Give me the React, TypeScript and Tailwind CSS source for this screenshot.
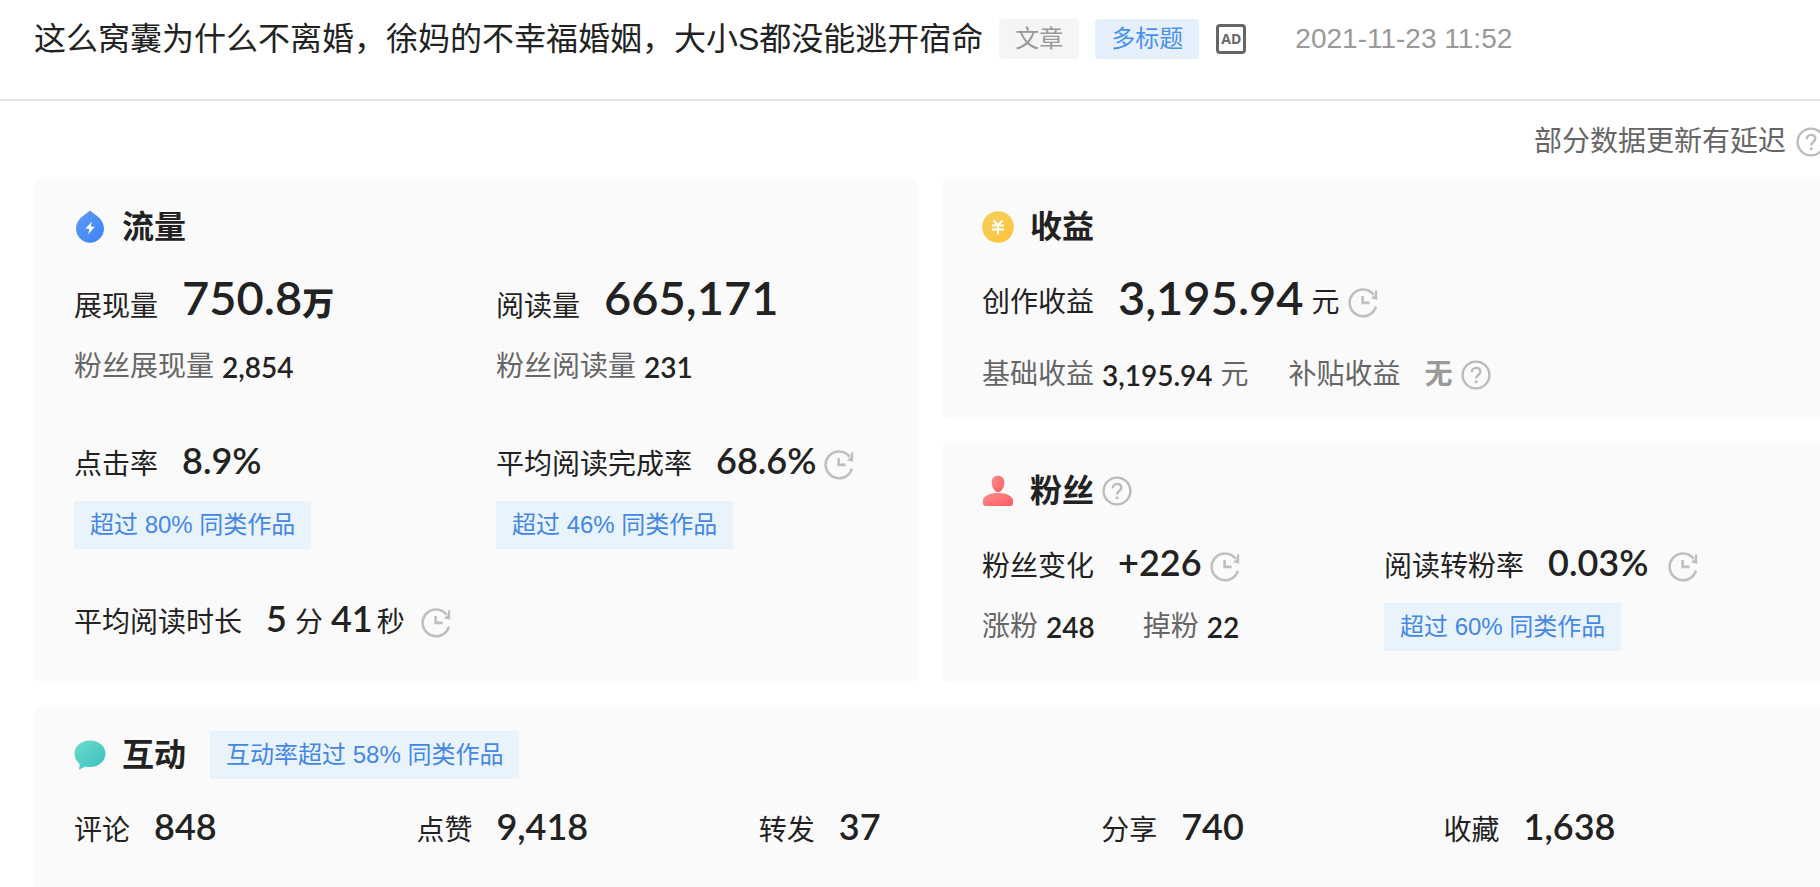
import type { ReactNode } from 'react'

const cjk = "font-['Liberation_Sans','Noto_Sans_CJK_SC',sans-serif]"
const num = "font-['Lato','Noto_Sans_CJK_SC',sans-serif] font-semibold text-[#222]"

function ClockIcon({ className = '' }: { className?: string }) {
  return (
    <svg viewBox="0 0 30 30" fill="none" stroke="#bfbfbf" strokeWidth="2.6" className={`h-10 w-[30px] shrink-0 ${className}`}>
      <path d="M27.9 18.6A13.4 13.4 0 1 1 25.6 6.6" />
      <path d="M29.2 2.2v9.6l-6.4-1.6 3.8-3.2.6-4.8Z" fill="#bfbfbf" stroke="none" />
      <path d="M14.6 8v6.9h7" />
    </svg>
  )
}

function HelpIcon({ className = '' }: { className?: string }) {
  return (
    <svg viewBox="0 0 30 30" fill="none" stroke="#bbb" strokeWidth="2.4" className={`h-10 w-[30px] shrink-0 ${className}`}>
      <circle cx="15" cy="15" r="13.4" />
      <path d="M10.8 12.2c0-2.6 1.8-4.3 4.3-4.3s4.2 1.6 4.2 3.9c0 3.2-4.2 3.3-4.2 6.6" />
      <circle cx="15.1" cy="21.8" r="1.5" fill="#bbb" stroke="none" />
    </svg>
  )
}

function TrafficIcon() {
  return (
    <svg viewBox="0 0 32 32" className="h-8 w-8">
      <defs>
        <linearGradient id="traffic" x1="0" y1="0" x2="1" y2="1">
          <stop offset="0" stopColor="#5f9bf3" />
          <stop offset="1" stopColor="#3d83f8" />
        </linearGradient>
      </defs>
      <path d="M14.4.7a2.4 2.4 0 0 1 3.2 0C22 4.3 30 8.5 30 17.5A14 14.3 0 0 1 2 17.5C2 8.5 10 4.3 14.4.7Z" fill="url(#traffic)" />
      <path d="M17.8 10.5 11.5 17.8h3.8L14.3 23.5l6.4-7.8h-3.9Z" fill="#fff" />
    </svg>
  )
}

function IncomeIcon() {
  return (
    <svg viewBox="0 0 32 32" className="h-8 w-8">
      <defs>
        <linearGradient id="income" x1="0" y1="0" x2="1" y2="1">
          <stop offset="0" stopColor="#f5cf5e" />
          <stop offset="1" stopColor="#ffc33c" />
        </linearGradient>
      </defs>
      <circle cx="16" cy="16" r="15.8" fill="url(#income)" />
      <path d="m11.5 9.5 4.5 4.5 4.5-4.5M10 14.5h12M10 18.5h12M16 14v9.5" fill="none" stroke="#fff" strokeWidth="2" />
    </svg>
  )
}

function FansIcon() {
  return (
    <svg viewBox="0 0 32 32" className="h-8 w-8">
      <defs>
        <linearGradient id="fans" x1="0" y1="0" x2="1" y2="1">
          <stop offset="0" stopColor="#f88c8c" />
          <stop offset="1" stopColor="#ff5c61" />
        </linearGradient>
      </defs>
      <path d="M16 .8c3.9 0 6.3 2.7 6.3 6.4 0 4.3-2.4 10-6.3 10s-6.3-5.7-6.3-10C9.700 3.5 12.1.8 16 .8Z" fill="url(#fans)" />
      <path d="M1 24.5C3 20 9 18 16 18s13 2 15 6.5v4c0 1.5-.8 2.5-2.5 2.5h-25C1.8 31 1 30 1 28.5Z" fill="url(#fans)" />
    </svg>
  )
}

function ChatIcon() {
  return (
    <svg viewBox="0 0 32 32" className="h-8 w-8">
      <defs>
        <linearGradient id="chat" x1="0" y1="0" x2="1" y2="1">
          <stop offset="0" stopColor="#6fdccb" />
          <stop offset="1" stopColor="#36bfc0" />
        </linearGradient>
      </defs>
      <path d="M16 1.5c8.7 0 15.5 5.5 15.5 13S24.7 28 16 28c-1.7 0-3.3-.2-4.7-.6L6 30.3c-.6.3-1 0-.9-.7l.7-4.7C2.5 22.5.5 18.8.5 14.5c0-7.5 6.8-13 15.5-13Z" fill="url(#chat)" />
    </svg>
  )
}

function AdIcon() {
  return (
    <span className="flex h-8 w-8 items-center justify-center">
      <span className="flex h-[30px] w-[30px] items-center justify-center rounded-sm border-[3px] border-[#666] font-['Open_Sans',sans-serif] text-sm font-bold text-[#666]">
        AD
      </span>
    </span>
  )
}

function Heading({ icon, title, children }: { icon: ReactNode; title: string; children?: ReactNode }) {
  return (
    <div className="flex h-12 items-center">
      {icon}
      <h2 className="ml-4 text-[32px] leading-10 font-bold">{title}</h2>
      {children}
    </div>
  )
}

function Rank({ children, className = '' }: { children: ReactNode; className?: string }) {
  return (
    <span className={`inline-flex h-12 items-center bg-[#e9f3fc] px-4 text-2xl text-[#4487e6] ${className}`}>
      {children}
    </span>
  )
}

// etiqueta + valor, alineados abajo
function Metric({ label, value, children }: { label: string; value: ReactNode; children?: ReactNode }) {
  return (
    <div className="flex items-end whitespace-nowrap">
      <span className="mr-6">{label}</span>
      <span className={`${num} text-4xl leading-[50px]`}>{value}</span>
      {children}
    </div>
  )
}

function SubMetric({ label, value }: { label: string; value: string }) {
  return (
    <div className="flex items-end gap-2 whitespace-nowrap text-[#666]">
      <span>{label}</span>
      <span className={num}>{value}</span>
    </div>
  )
}

const interactions = [
  { label: '评论', value: '848' },
  { label: '点赞', value: '9,418' },
  { label: '转发', value: '37' },
  { label: '分享', value: '740' },
  { label: '收藏', value: '1,638' },
]

export default function App() {
  return (
    <div lang="zh-CN" className={`${cjk} flex min-h-screen flex-col overflow-hidden bg-white text-[28px] leading-10 text-[#222]`}>
      <header className="flex items-center border-b-2 border-[#e5e5e5] pt-[19px] pb-10 pl-[34px] whitespace-nowrap">
        <h1 className="text-[32px] leading-10">这么窝囊为什么不离婚，徐妈的不幸福婚姻，大小S都没能逃开宿命</h1>
        <span className="ml-4 rounded-sm bg-[#f5f5f5] px-4 text-2xl leading-10 text-[#999]">文章</span>
        <span className="mx-4 rounded-sm bg-[#e6f0fd] px-4 text-2xl leading-10 text-[#4a90f0]">多标题</span>
        <AdIcon />
        <time className="ml-12 text-[#999]">2021-11-23 11:52</time>
      </header>

      {/* el contenido sobresale un poco por la derecha */}
      <main className="-mr-1.5 flex flex-1 flex-col pl-[34px]">
        <div className="flex h-[78px] items-center justify-end gap-2.5 pt-1 text-[#666]">
          部分数据更新有延迟
          <HelpIcon />
        </div>

        <div className="grid grid-cols-2 gap-6">
          <section className="rounded-lg bg-[#fafafa] pt-6 pb-10 pl-10">
            <Heading icon={<TrafficIcon />} title="流量" />
            <div className="mt-4 grid grid-cols-2">
              <div>
                <div className="flex items-end">
                  <span className="mr-6">展现量</span>
                  <span className={`${num} text-[47px] leading-[60px]`}>
                    750.8<b className="text-[32px] leading-none">万</b>
                  </span>
                </div>
                <div className="mt-5"><SubMetric label="粉丝展现量" value="2,854" /></div>
              </div>
              <div>
                <div className="flex items-end">
                  <span className="mr-6">阅读量</span>
                  <span className={`${num} text-[47px] leading-[60px]`}>665,171</span>
                </div>
                <div className="mt-5"><SubMetric label="粉丝阅读量" value="231" /></div>
              </div>
            </div>
            <div className="mt-12 grid grid-cols-2">
              <div>
                <Metric label="点击率" value="8.9%" />
                <Rank className="mt-4">超过 80% 同类作品</Rank>
              </div>
              <div>
                <Metric label="平均阅读完成率" value="68.6%"><ClockIcon className="ml-2" /></Metric>
                <Rank className="mt-4">超过 46% 同类作品</Rank>
              </div>
            </div>
            <div className="mt-11">
              <Metric label="平均阅读时长" value="5">
                <span className="mx-2">分</span>
                <span className={`${num} text-4xl leading-[50px]`}>41</span>
                <span className="ml-1">秒</span>
                <ClockIcon className="ml-4" />
              </Metric>
            </div>
          </section>

          <div className="flex flex-col gap-6">
            <section className="rounded-lg bg-[#fafafa] px-10 py-6">
              <Heading icon={<IncomeIcon />} title="收益" />
              <div className="mt-5 flex items-end">
                <span className="mr-6">创作收益</span>
                <span className={`${num} text-[47px] leading-[52px]`}>3,195.94</span>
                <span className="mx-2">元</span>
                <ClockIcon />
              </div>
              <div className="mt-8 flex text-[#666]">
                <SubMetric label="基础收益" value="3,195.94" />
                <span className="ml-2">元</span>
                <span className="ml-10">补贴收益</span>
                <b className="mr-2 ml-6 text-[#999]">无</b>
                <HelpIcon />
              </div>
            </section>

            <section className="flex-1 rounded-lg bg-[#fafafa] px-10 pt-6 pb-8">
              <Heading icon={<FansIcon />} title="粉丝">
                <HelpIcon className="ml-2" />
              </Heading>
              <div className="mt-[22px] grid grid-cols-2 gap-y-4">
                <Metric label="粉丝变化" value="+226"><ClockIcon className="ml-2" /></Metric>
                <Metric label="阅读转粉率" value="0.03%"><ClockIcon className="ml-5" /></Metric>
                <div className="flex items-center gap-12">
                  <SubMetric label="涨粉" value="248" />
                  <SubMetric label="掉粉" value="22" />
                </div>
                <div className="flex">
                  <Rank>超过 60% 同类作品</Rank>
                </div>
              </div>
            </section>
          </div>
        </div>

        <section className="mt-6 flex-1 rounded-t-lg bg-[#fafafa] px-10 pt-6">
          <Heading icon={<ChatIcon />} title="互动">
            <Rank className="ml-6">互动率超过 58% 同类作品</Rank>
          </Heading>
          <div className="mt-[22px] grid grid-cols-5">
            {interactions.map((item) => (
              <Metric key={item.label} label={item.label} value={item.value} />
            ))}
          </div>
        </section>
      </main>
    </div>
  )
}
